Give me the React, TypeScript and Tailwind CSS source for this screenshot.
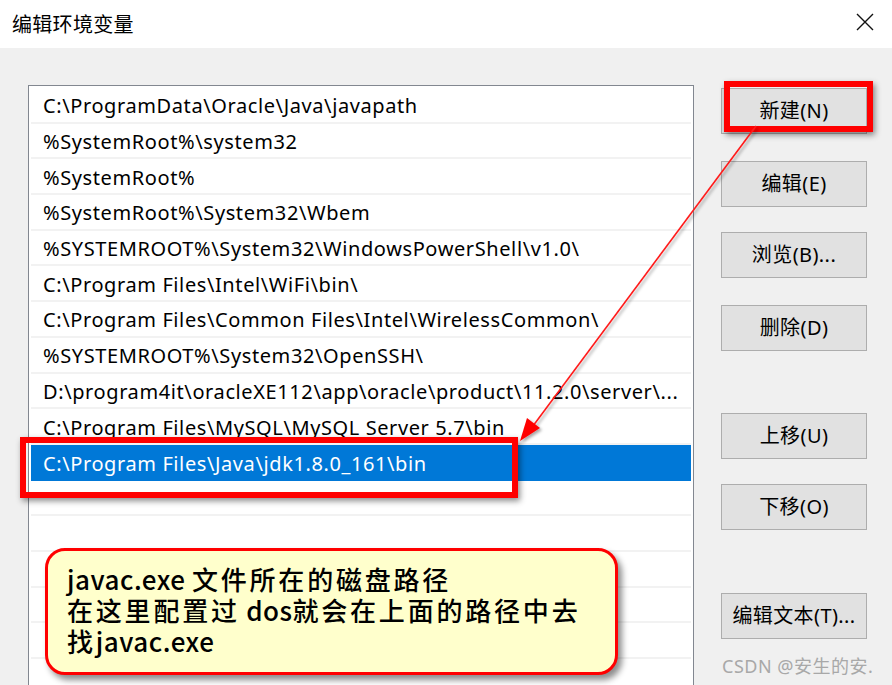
import React from "react";

const paths = [
  "C:\\ProgramData\\Oracle\\Java\\javapath",
  "%SystemRoot%\\system32",
  "%SystemRoot%",
  "%SystemRoot%\\System32\\Wbem",
  "%SYSTEMROOT%\\System32\\WindowsPowerShell\\v1.0\\",
  "C:\\Program Files\\Intel\\WiFi\\bin\\",
  "C:\\Program Files\\Common Files\\Intel\\WirelessCommon\\",
  "%SYSTEMROOT%\\System32\\OpenSSH\\",
  "D:\\program4it\\oracleXE112\\app\\oracle\\product\\11.2.0\\server\\...",
  "C:\\Program Files\\MySQL\\MySQL Server 5.7\\bin",
  "C:\\Program Files\\Java\\jdk1.8.0_161\\bin",
  "",
  "",
  "",
  "",
  "",
  "",
];

const SELECTED = 10;

function WinButton({ label, className = "" }: { label: string; className?: string }) {
  return (
    <button
      className={`h-[46px] w-[146px] border border-[#adadad] bg-[#e1e1e1] text-[20px] tracking-[0.4px] text-black flex items-center justify-center ${className}`}
    >
      {label}
    </button>
  );
}

// latin bits in the callout are tighter than the CJK
function L({ children }: { children: React.ReactNode }) {
  return <span className="tracking-[0.5px]">{children}</span>;
}

export default function App() {
  return (
    <div
      className="relative w-[892px] h-[685px] overflow-hidden bg-[#f0f0f0]"
      style={{ fontFamily: '"Noto Sans", "Noto Sans CJK SC", sans-serif' }}
    >
      {/* title bar */}
      <div className="h-[48px] bg-white flex items-center justify-between pl-[12px] pr-[18px]">
        <span
          className="text-[20px] tracking-[0.3px] text-black"
          style={{ fontFamily: '"Noto Sans CJK SC", sans-serif' }}
        >
          编辑环境变量
        </span>
        <svg width="18" height="18" viewBox="0 0 18 18" className="mb-[4px]">
          <path d="M1 1 L17 17 M17 1 L1 17" stroke="#111" strokeWidth="1.4" />
        </svg>
      </div>

      <div className="flex items-start">
        {/* path list */}
        <div className="ml-[28px] mt-[37px] w-[666px] h-[620px] border border-[#828790] bg-white p-[2px]">
          {paths.map((p, i) => (
            <div
              key={i}
              className={`h-[35.7px] pl-[12px] pt-[3px] flex items-center text-[20px] tracking-[0.6px] whitespace-nowrap overflow-hidden ${
                i === SELECTED
                  ? "bg-[#0078d7] text-white"
                  : "text-black border-b-2 border-[#f2f2f2]"
              }`}
            >
              {p}
            </div>
          ))}
        </div>

        {/* buttons */}
        <div className="ml-[27px] mt-[40px] flex flex-col">
          <WinButton label="新建(N)" />
          <WinButton label="编辑(E)" className="mt-[27px]" />
          <WinButton label="浏览(B)..." className="mt-[25px]" />
          <WinButton label="删除(D)" className="mt-[27px]" />
          <WinButton label="上移(U)" className="mt-[62px]" />
          <WinButton label="下移(O)" className="mt-[25px]" />
          <WinButton label="编辑文本(T)..." className="mt-[63px]" />
        </div>
      </div>

      {/* annotations */}
      <div className="absolute left-[724px] top-[81px] w-[149px] h-[51px] border-[6px] border-[#ff0000] shadow-[2px_3px_6px_rgba(0,0,0,0.45)]" />
      <div className="absolute left-[20px] top-[437px] w-[498px] h-[61px] border-[6px] border-[#ff0000] shadow-[2px_3px_6px_rgba(0,0,0,0.45)]" />

      <svg className="absolute left-0 top-0" width="892" height="685" viewBox="0 0 892 685">
        <defs>
          <filter id="sh" x="-10%" y="-10%" width="120%" height="120%">
            <feDropShadow dx="2" dy="2" stdDeviation="1.5" floodColor="#000" floodOpacity="0.35" />
          </filter>
        </defs>
        <g filter="url(#sh)">
          <line x1="756" y1="126" x2="530" y2="430" stroke="#ff1a1a" strokeWidth="1.6" />
          <polygon points="520,441 540,428 527,418" fill="#ff0000" />
        </g>
      </svg>

      {/* callout */}
      <div
        className="absolute left-[45px] top-[548px] w-[573px] h-[127px] rounded-[20px] border-[3px] border-[#ff0000] bg-[#ffffcc] pl-[19px] pt-[12px] shadow-[4px_5px_6px_rgba(0,0,0,0.45)] text-[26px] leading-[31px] tracking-[2.8px] text-black font-medium whitespace-nowrap"
        style={{ fontFamily: '"Noto Sans CJK SC", sans-serif' }}
      >
        <div>
          <L>javac.exe </L>文件所在的磁盘路径
        </div>
        <div>
          在这里配置过<L> dos</L>就会在上面的路径中去
        </div>
        <div>
          找<L>javac.exe</L>
        </div>
      </div>

      <div
        className="absolute left-[722px] top-[655px] text-[18px] leading-[22px] tracking-[0.5px] text-[#a8a8a8]"
        style={{ fontFamily: '"Noto Sans", "Noto Sans CJK SC", sans-serif' }}
      >
        CSDN @安生的安.
      </div>
    </div>
  );
}
